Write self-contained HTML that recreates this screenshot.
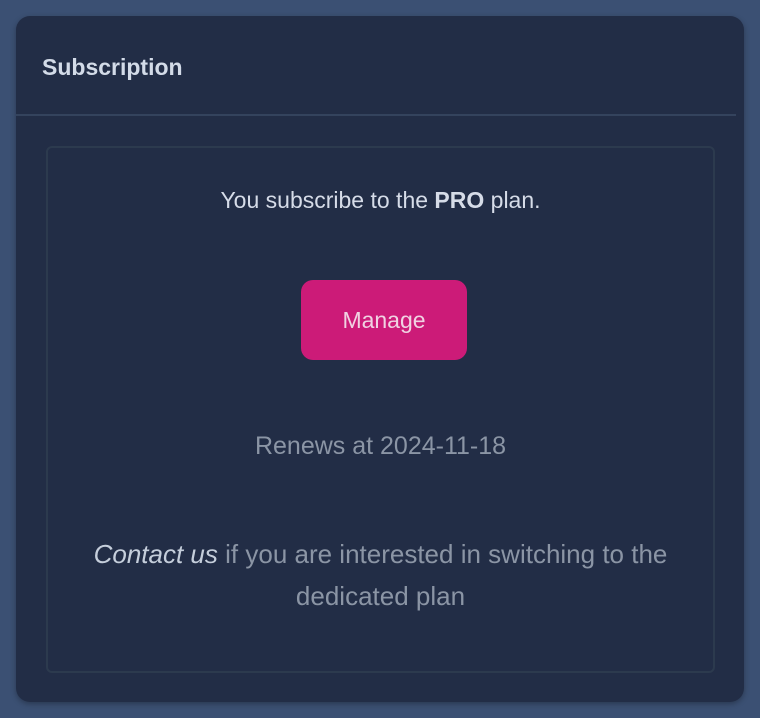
<!DOCTYPE html>
<html><head><style>
html,body{margin:0;padding:0;width:760px;height:718px;background:#3b5073;font-family:"Liberation Sans",sans-serif;overflow:hidden}
.card{position:absolute;left:16px;top:16px;width:728px;height:686px;background:#222d46;border-radius:14px;box-shadow:0 2px 6px rgba(0,0,0,.3)}
.h{position:absolute;left:26px;top:38px;font-size:23px;font-weight:bold;color:#d3dbe8}
.div{position:absolute;left:0;top:98px;width:720px;height:2px;background:#34435d}
.box{position:absolute;left:30px;top:130px;width:665px;height:523px;border:2px solid #2c3a4e;border-radius:6px}
.t{position:absolute;left:0;width:665px;text-align:center}
.p1{top:39px;font-size:23px;color:#d6dce8}
.btn{position:absolute;left:253px;top:132px;width:166px;height:80px;background:#cc1b78;border-radius:12px;color:#f0d2e2;font-size:23px;line-height:80px;text-align:center}
.p2{top:284px;font-size:25px;color:#8b95a5}
.p3{top:385px;font-size:26px;line-height:42px;color:#8b95a5}
.p3 i{color:#c5cedb}
</style></head><body>
<div class="card">
<div class="h">Subscription</div>
<div class="div"></div>
<div class="box">
<div class="t p1">You subscribe to the <b>PRO</b> plan.</div>
<div class="btn">Manage</div>
<div class="t p2">Renews at 2024-11-18</div>
<div class="t p3"><i>Contact us</i> if you are interested in switching to the<br>dedicated plan</div>
</div>
</div>
</body></html>
